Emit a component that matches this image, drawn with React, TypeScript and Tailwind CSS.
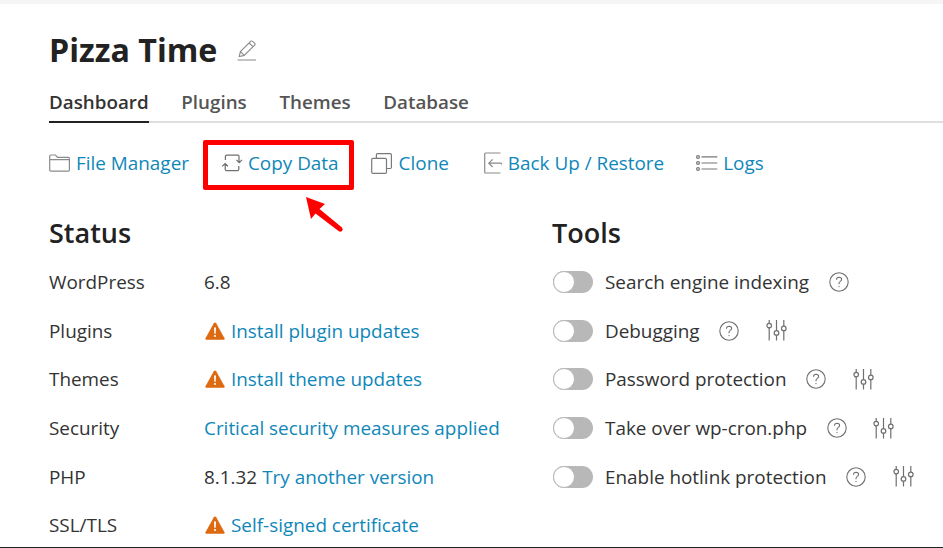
const Folder = () => (
  <svg width="21" height="18" viewBox="0 0 21 18" fill="none" stroke="#8a8a8a" strokeWidth="1.2">
    <path d="M.7 16V2.200Q.7 1 1.900 1h4.600l2 2.400h10.700q1.200 0 1.200 1.200V16q0 1.200-1.200 1.200H1.900Q.7 17.200.7 16ZM.7 5.600h19.700" />
  </svg>
);

const CopyArrows = () => (
  <svg width="22" height="18" viewBox="0 0 22 18" fill="none" stroke="#6f6f6f" strokeWidth="1.2">
    <path d="M4.400 6V2.400q0-1.200 1.200-1.200h11.200q1.200 0 1.200 1.200v5.800M15.400 5.800l2.800 2.800 2.800-2.800M17.800 12v3.400q0 1.200-1.200 1.200H5.400q-1.200 0-1.200-1.200V9.800M1.200 12.400l3-2.800 2.800 2.800" />
  </svg>
);

const CloneIcon = () => (
  <svg width="21" height="21" viewBox="0 0 21 21" fill="none" stroke="#7a7a7a" strokeWidth="1.2">
    <rect x=".7" y="5.400" width="14.800" height="15" rx="1.200" />
    <path d="M5.400 5.400V1.900Q5.400.7 6.600.7h12.600q1.200 0 1.200 1.200v12.400q0 1.200-1.200 1.200h-3.700" />
  </svg>
);

const BackupIcon = () => (
  <svg width="21" height="22" viewBox="-3 0 21 22" fill="none" stroke="#8a8a8a" strokeWidth="1.2">
    <path d="M16.500 1H1.600Q.7 1 .7 2v18q0 1 .9 1h14.900M5 11.200h11.500q2 0 2 2.200v1.400M8.600 7.400 4.800 11.200l3.800 3.800" />
  </svg>
);

const LogsIcon = () => (
  <svg width="22" height="16" viewBox="0 0 22 16" fill="none" stroke="#777" strokeWidth="1.2">
    <circle cx="2" cy="2" r="1.400" />
    <circle cx="2" cy="8" r="1.400" />
    <circle cx="2" cy="14" r="1.400" />
    <path d="M5.500 1.800h15.800M5.500 8h15.800M5.500 14h15.800" />
  </svg>
);

const Pencil = () => (
  <svg width="20" height="21" viewBox="0 0 20 21" fill="none" stroke="#8a8a8a" strokeWidth="1.1">
    <path d="M2.200 16.600 3.400 11.600 13.600 1.400q1-.9 2 0l2 1.800q1 1 0 2L7.200 15.400ZM3.400 11.600l3.800 3.800M12 3l4 3.700M.5 20h18.600" />
  </svg>
);

const Warning = () => (
  <svg width="20" height="18" viewBox="0 0 20 18" className="shrink-0">
    <path d="M10 .6q.8 0 1.200.7l8.300 15q.5 1.200-.8 1.400H1.300Q0 17.500.5 16.300l8.300-15Q9.200.6 10 .6Z" fill="#dd6a10" />
    <path d="M9 5.400h2l-.3 6.400H9.300Z" fill="#fff" />
    <circle cx="10" cy="14" r="1.100" fill="#fff" />
  </svg>
);

const Help = () => (
  <svg width="20" height="20" viewBox="0 0 20 20" fill="none" stroke="#707070" strokeWidth="1.100" className="shrink-0">
    <circle cx="10" cy="10" r="9.200" />
    <path d="M7.400 7.700q.2-2.500 2.700-2.500 2.500.1 2.500 2.200 0 1.200-1.300 2-1.300.8-1.300 2.200v.6" />
    <circle cx="10" cy="14.600" r=".7" fill="#707070" stroke="none" />
  </svg>
);

const Sliders = () => (
  <svg width="21" height="21" viewBox="0 0 21 21" fill="none" stroke="#6f6f6f" strokeWidth="1.200" className="shrink-0">
    <path d="M3.200 0v3.200M3.200 8v12.500M10.500 0v10.500M10.500 15.300v5.200M17.800 0v6M17.800 10.800v9.700" />
    <circle cx="3.200" cy="5.600" r="2.300" />
    <circle cx="10.500" cy="12.900" r="2.300" />
    <circle cx="17.800" cy="8.400" r="2.300" />
  </svg>
);

const Toggle = () => (
  <span className="ml-[1px] flex h-[22px] w-10 shrink-0 items-center rounded-full bg-[#b8b8b8]">
    <span className="h-[22px] w-[22px] rounded-full border border-[#b8b8b8] bg-white" />
  </span>
);

const tabs = ["Dashboard", "Plugins", "Themes", "Database"];

const actions = [
  { label: "File Manager", icon: <Folder />, gap: "gap-[6px]" },
  { label: "Copy Data", icon: <CopyArrows />, gap: "gap-[5px]" },
  { label: "Clone", icon: <CloneIcon />, gap: "gap-[7px]" },
  { label: "Back Up / Restore", icon: <BackupIcon />, gap: "gap-[6px]" },
  { label: "Logs", icon: <LogsIcon />, gap: "gap-[5px]" },
];

const statusRows = [
  { name: "WordPress", text: "6.8" },
  { name: "Plugins", link: "Install plugin updates", warn: true },
  { name: "Themes", link: "Install theme updates", warn: true },
  { name: "Security", link: "Critical security measures applied" },
  { name: "PHP", text: "8.1.32", link: "Try another version" },
  { name: "SSL/TLS", link: "Self-signed certificate", warn: true },
];

const tools = [
  { name: "Search engine indexing", sliders: false },
  { name: "Debugging", sliders: true },
  { name: "Password protection", sliders: true },
  { name: "Take over wp-cron.php", sliders: true },
  { name: "Enable hotlink protection", sliders: true },
];

export default function App() {
  return (
    <div className="relative flex h-[548px] w-[943px] flex-col overflow-hidden bg-white font-['Open_Sans',sans-serif] text-[18.9px] text-[#333]">
      <div className="h-1 shrink-0 bg-[#f5f5f5]" />

      <div className="flex-1 pl-[49px]">
        <div className="mt-[24px] flex h-[44px] items-center gap-[20px]">
          <h1 className="text-[32.2px] leading-[44px] font-bold text-[#222]">Pizza Time</h1>
          <Pencil />
        </div>

        <div className="mt-[16px] flex h-[35px] gap-[32.700px] border-b-2 border-[#dedede] text-[18.8px]">
          {tabs.map((tab, i) => (
            <div
              key={tab}
              className={
                i === 0
                  ? "-mb-[2px] border-b-2 border-[#222] leading-[28px] font-semibold text-[#333]"
                  : "leading-[28px] font-semibold text-[#555]"
              }
            >
              {tab}
            </div>
          ))}
        </div>

        <div className="mt-[26px] flex h-[28px] items-center gap-8">
          {actions.map((a) => (
            <div key={a.label} className={`flex items-center ${a.gap}`}>
              {a.icon}
              <span className="leading-[28px] text-[#0f87b9]">{a.label}</span>
            </div>
          ))}
        </div>

        <div className="mt-[38px] grid grid-cols-[503px_1fr]">
          <div>
            <h2 className="h-[36px] text-[27px] leading-[36px] font-semibold text-[#222]">Status</h2>
            <div className="mt-[17px] flex flex-col gap-[20.700px]">
              {statusRows.map((row) => (
                <div key={row.name} className="flex h-[28px] items-center leading-[28px]">
                  <span className="w-[155px]">{row.name}</span>
                  {row.warn && <span className="mr-[6px] ml-[1px]"><Warning /></span>}
                  {row.text && <span className="mr-[5px]">{row.text}</span>}
                  {row.link && <span className="text-[#0f87b9]">{row.link}</span>}
                </div>
              ))}
            </div>
          </div>

          <div>
            <h2 className="h-[36px] text-[27px] leading-[36px] font-semibold text-[#222]">Tools</h2>
            <div className="mt-[17px] flex flex-col gap-[20.700px]">
              {tools.map((tool) => (
                <div key={tool.name} className="flex h-[28px] items-center">
                  <Toggle />
                  <span className="ml-[12px] leading-[28px]">{tool.name}</span>
                  <span className="ml-[19.500px]"><Help /></span>
                  {tool.sliders && <span className="ml-[26.500px]"><Sliders /></span>}
                </div>
              ))}
            </div>
          </div>
        </div>
      </div>

      <div className="absolute right-0 bottom-0 left-0 h-[1px] bg-[#222]" />

      {/* annotation drawn over the screenshot */}
      <div className="absolute top-[140px] left-[203px] h-[50px] w-[151px] rounded-[2px] border-[5px] border-[#fe0000]" />
      <svg className="absolute top-[196px] left-[303px]" width="42" height="38" viewBox="0 0 42 38">
        <path d="M3 1 22 8 16.500 13 39 31.500q1.500 2 0 3.500t-3.500 0L12.500 17.500 8 23Z" fill="#fe0000" />
      </svg>
    </div>
  );
}
